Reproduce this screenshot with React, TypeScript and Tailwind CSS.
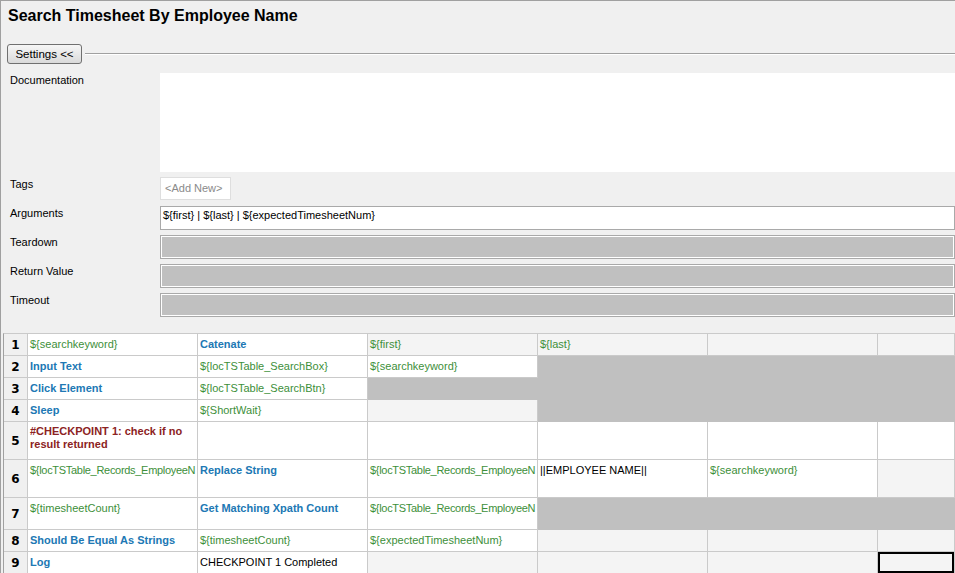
import React from 'react';

type Bg = 'w' | 'l' | 'd';
type Kind = 'var' | 'kw' | 'txt' | 'cmt';

interface Cell {
  text?: string;
  kind?: Kind;
  bg: Bg;
  lines?: string[];
  selected?: boolean;
  tight?: boolean;
}

interface Row {
  h: string;
  cells: Cell[];
}

const rows: Row[] = [
  {
    h: 'h-[22px]',
    cells: [
      { text: '${searchkeyword}', kind: 'var', bg: 'w' },
      { text: 'Catenate', kind: 'kw', bg: 'w' },
      { text: '${first}', kind: 'var', bg: 'l' },
      { text: '${last}', kind: 'var', bg: 'l' },
      { bg: 'l' },
      { bg: 'l' },
    ],
  },
  {
    h: 'h-[22px]',
    cells: [
      { text: 'Input Text', kind: 'kw', bg: 'w' },
      { text: '${locTSTable_SearchBox}', kind: 'var', bg: 'w' },
      { text: '${searchkeyword}', kind: 'var', bg: 'w' },
      { bg: 'd' },
      { bg: 'd' },
      { bg: 'd' },
    ],
  },
  {
    h: 'h-[22px]',
    cells: [
      { text: 'Click Element', kind: 'kw', bg: 'w' },
      { text: '${locTSTable_SearchBtn}', kind: 'var', bg: 'w' },
      { bg: 'd' },
      { bg: 'd' },
      { bg: 'd' },
      { bg: 'd' },
    ],
  },
  {
    h: 'h-[22px]',
    cells: [
      { text: 'Sleep', kind: 'kw', bg: 'w' },
      { text: '${ShortWait}', kind: 'var', bg: 'w' },
      { bg: 'l' },
      { bg: 'd' },
      { bg: 'd' },
      { bg: 'd' },
    ],
  },
  {
    h: 'h-[38px]',
    cells: [
      { lines: ['#CHECKPOINT 1: check if no', 'result returned'], kind: 'cmt', bg: 'w' },
      { bg: 'w' },
      { bg: 'w' },
      { bg: 'w' },
      { bg: 'w' },
      { bg: 'w' },
    ],
  },
  {
    h: 'h-[38px]',
    cells: [
      { text: '${locTSTable_Records_EmployeeN', kind: 'var', bg: 'w', tight: true },
      { text: 'Replace String', kind: 'kw', bg: 'w' },
      { text: '${locTSTable_Records_EmployeeN', kind: 'var', bg: 'w', tight: true },
      { text: '||EMPLOYEE NAME||', kind: 'txt', bg: 'w' },
      { text: '${searchkeyword}', kind: 'var', bg: 'w' },
      { bg: 'l' },
    ],
  },
  {
    h: 'h-[32px]',
    cells: [
      { text: '${timesheetCount}', kind: 'var', bg: 'w' },
      { text: 'Get Matching Xpath Count', kind: 'kw', bg: 'w' },
      { text: '${locTSTable_Records_EmployeeN', kind: 'var', bg: 'w', tight: true },
      { bg: 'd' },
      { bg: 'd' },
      { bg: 'd' },
    ],
  },
  {
    h: 'h-[22px]',
    cells: [
      { text: 'Should Be Equal As Strings', kind: 'kw', bg: 'w' },
      { text: '${timesheetCount}', kind: 'var', bg: 'w' },
      { text: '${expectedTimesheetNum}', kind: 'var', bg: 'w' },
      { bg: 'l' },
      { bg: 'l' },
      { bg: 'l' },
    ],
  },
  {
    h: 'h-[22px]',
    cells: [
      { text: 'Log', kind: 'kw', bg: 'w' },
      { text: 'CHECKPOINT 1 Completed', kind: 'txt', bg: 'w' },
      { bg: 'l' },
      { bg: 'l' },
      { bg: 'l' },
      { bg: 'l', selected: true },
    ],
  },
];

const bgClass: Record<Bg, string> = {
  w: 'bg-white border-[#cacaca]',
  l: 'bg-[#f4f4f4] border-[#cacaca]',
  d: 'bg-[#c0c0c0] border-[#c0c0c0]',
};

const kindClass: Record<Kind, string> = {
  var: 'text-[#3d8f3a]',
  kw: 'text-[#2078b4] font-bold',
  txt: 'text-black',
  cmt: 'text-[#8c2323] font-bold',
};

const GrayField: React.FC = () => (
  <div className="h-[24px] border border-[#a9a9a9] bg-white p-px">
    <div className="h-full bg-[#c0c0c0]" />
  </div>
);

const SettingRow: React.FC<{ label: string; children: React.ReactNode; mt?: string }> = ({ label, children, mt }) => (
  <div className={`flex ${mt ?? ''}`}>
    <div className="w-[159px] shrink-0 pl-[9px] leading-[14px]">{label}</div>
    <div className="flex-1">{children}</div>
  </div>
);

export default function App() {
  return (
    <div className="w-[955px] h-[573px] overflow-hidden bg-[#f0f0f0] border-t border-l border-[#a0a0a0] font-['Liberation_Sans',Arial,sans-serif] text-[11px] text-black">
      {/* Title */}
      <div className="h-[43px] pl-[7px] pt-[5px] text-[16px] font-bold leading-[20px]">
        Search Timesheet By Employee Name
      </div>

      {/* Settings toggle */}
      <div className="flex items-center h-[20px]">
        <button className="ml-[6px] w-[75px] h-[20px] rounded-[3px] border border-[#707070] bg-gradient-to-b from-[#f6f6f6] to-[#dadada] text-[11.5px] leading-[18px]">
          Settings &lt;&lt;
        </button>
        <div className="flex-1 ml-[3px] border-t border-[#a0a0a0] border-b border-b-white" />
      </div>

      {/* Settings */}
      <div className="mt-[9px]">
        <SettingRow label="Documentation">
          <div className="h-[99px] bg-white" />
        </SettingRow>
        <SettingRow label="Tags" mt="mt-[5px]">
          <div className="w-[71px] h-[23px] border border-[#dedede] bg-white pl-[4px] leading-[20px] text-[#8a8a8a]">
            &lt;Add New&gt;
          </div>
        </SettingRow>
        <SettingRow label="Arguments" mt="mt-[6px]">
          <div className="h-[24px] border border-[#a9a9a9] bg-white pl-[2px] leading-[17px]">
            {'${first} | ${last} | ${expectedTimesheetNum}'}
          </div>
        </SettingRow>
        <SettingRow label="Teardown" mt="mt-[5px]">
          <GrayField />
        </SettingRow>
        <SettingRow label="Return Value" mt="mt-[5px]">
          <GrayField />
        </SettingRow>
        <SettingRow label="Timeout" mt="mt-[5px]">
          <GrayField />
        </SettingRow>
      </div>

      {/* Test steps table */}
      <div className="mt-[16px] ml-[2px] border-l border-t border-l-[#a0a0a0] border-t-[#cacaca]">
        {rows.map((row, i) => (
          <div key={i} className={`flex ${row.h}`}>
            <div className="w-[24px] shrink-0 flex items-center justify-center border-r border-b border-[#cacaca] bg-[#f0f0f0] font-['DejaVu_Sans',sans-serif] font-bold text-[12px]">
              {i + 1}
            </div>
            {row.cells.map((c, j) => (
              <div
                key={j}
                className={`${j === 5 ? 'flex-1' : 'w-[170px] shrink-0'} border-r border-b overflow-hidden pl-[2px] pt-[3px] ${bgClass[c.bg]} ${c.selected ? 'shadow-[inset_1px_1px_0_1px_#000,inset_0_0_0_2px_#000]' : ''}`}
              >
                {c.lines ? (
                  <div className={`leading-[13px] ${kindClass[c.kind ?? 'txt']}`}>
                    {c.lines.map((l, k) => (
                      <div key={k}>{l}</div>
                    ))}
                  </div>
                ) : c.text ? (
                  <div className={`whitespace-nowrap leading-[14px] ${c.tight ? 'tracking-[-0.3px]' : ''} ${kindClass[c.kind ?? 'txt']}`}>{c.text}</div>
                ) : null}
              </div>
            ))}
          </div>
        ))}
      </div>
    </div>
  );
}
